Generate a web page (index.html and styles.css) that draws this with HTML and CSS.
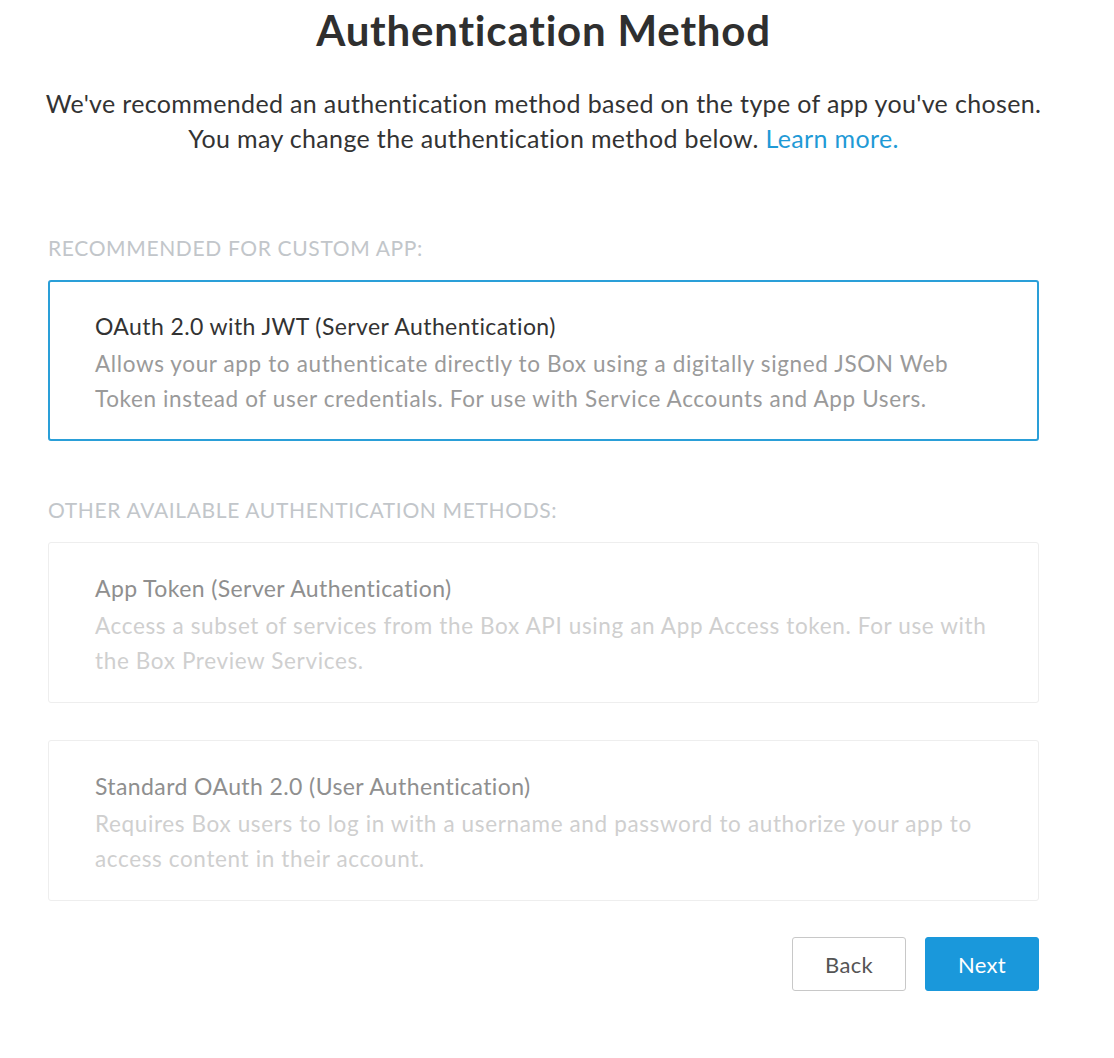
FILE: index.html
```html
<!DOCTYPE html>
<html>
<head>
<meta charset="utf-8">
<link rel="stylesheet" href="styles.css">
</head>
<body>
<div class="page">
  <h1 class="title">Authentication Method</h1>
  <p class="intro">We've recommended an authentication method based on the type of app you've chosen.<br>You may change the authentication method below. <a class="link" href="#">Learn more.</a></p>

  <div class="section-label first">RECOMMENDED FOR CUSTOM APP:</div>
  <div class="card selected">
    <div class="card-title">OAuth 2.0 with JWT (Server Authentication)</div>
    <div class="card-desc">Allows your app to authenticate directly to Box using a digitally signed JSON Web Token instead of user credentials. For use with Service Accounts and App Users.</div>
  </div>

  <div class="section-label">OTHER AVAILABLE AUTHENTICATION METHODS:</div>
  <div class="card disabled">
    <div class="card-title">App Token (Server Authentication)</div>
    <div class="card-desc">Access a subset of services from the Box API using an App Access token. For use with the Box Preview Services.</div>
  </div>
  <div class="card disabled">
    <div class="card-title">Standard OAuth 2.0 (User Authentication)</div>
    <div class="card-desc">Requires Box users to log in with a username and password to authorize your app to access content in their account.</div>
  </div>

  <div class="actions">
    <button class="btn btn-secondary">Back</button>
    <button class="btn btn-primary">Next</button>
  </div>
</div>
</body>
</html>
```

FILE: styles.css
```css
html, body {
  margin: 0;
  padding: 0;
  background: #ffffff;
}
body {
  font-family: Lato, "Open Sans", "Liberation Sans", sans-serif;
  color: #333;
}
.page {
  width: 991px;
  margin-left: 48px;
}
.title {
  margin: 0;
  font-size: 42px;
  line-height: 60px;
  font-weight: 700;
  letter-spacing: 0.8px;
  text-align: center;
  color: #2f2f2f;
}
.intro {
  margin: 26px -10px 0;
  font-size: 25px;
  line-height: 35px;
  letter-spacing: 0.35px;
  text-align: center;
  white-space: nowrap;
  color: #333;
}
.link {
  color: #1f9ad6;
  text-decoration: none;
}
.section-label {
  margin: 54px 0 0;
  font-size: 21px;
  line-height: 30px;
  color: #c2c6ca;
  letter-spacing: 0.65px;
}
.section-label.first {
  margin-top: 77px;
}
.card {
  box-sizing: border-box;
  height: 161px;
  margin-top: 17px;
  padding: 28px 46px 0 46px;
  border: 1px solid #eeeeee;
  border-radius: 3px;
}
.card + .card {
  margin-top: 37px;
}
.card.selected {
  border: 2px solid #2a9fd8;
  padding: 27px 45px 0 45px;
}
.card-title {
  font-size: 23px;
  line-height: 35px;
  letter-spacing: 0.4px;
}
.card-desc {
  margin-top: 2px;
  font-size: 22.5px;
  line-height: 35px;
  letter-spacing: 0.63px;
}
.selected .card-title { color: #333; }
.selected .card-desc { color: #9a9a9a; }
.disabled .card-title { color: #8f8f8f; }
.disabled .card-desc { color: #cfcfcf; }
.actions {
  display: flex;
  justify-content: flex-end;
  gap: 19px;
  margin-top: 36px;
}
.btn {
  box-sizing: border-box;
  width: 114px;
  height: 54px;
  border-radius: 3px;
  font-family: Lato, "Open Sans", "Liberation Sans", sans-serif;
  font-size: 22px;
  letter-spacing: 0.3px;
  cursor: pointer;
}
.btn-secondary {
  background: #fff;
  border: 1px solid #c8c8c8;
  color: #555;
}
.btn-primary {
  background: #1a98db;
  border: 1px solid #1a98db;
  color: #fff;
}
```
